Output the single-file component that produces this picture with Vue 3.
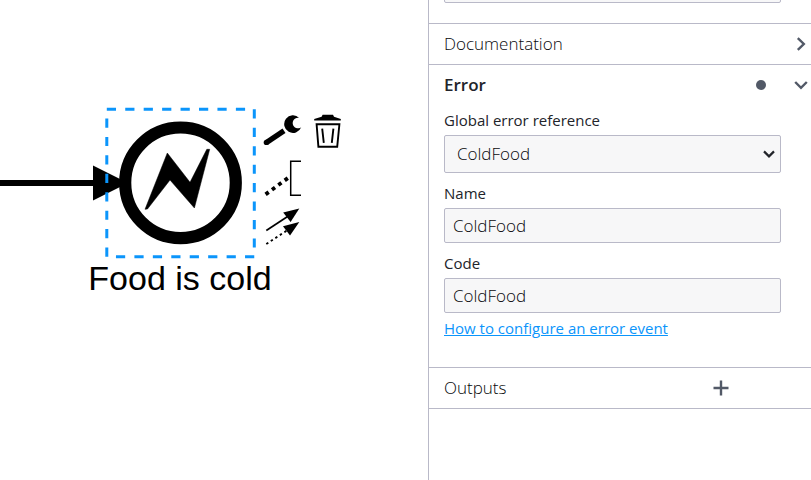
<script setup>
import { ref } from 'vue'

const elementName = ref('')
const errorRef = ref('ColdFood')
const errorName = ref('ColdFood')
const errorCode = ref('ColdFood')
const docOpen = ref(false)
const errorOpen = ref(true)
</script>

<template>
  <div class="modeler">
    <main class="canvas">
      <svg class="diagram" width="100%" height="100%" aria-label="Diagram">
        <path d="M0 183H96" stroke="#000" stroke-width="6" />
        <path d="M93 165.5L128 183L93 200.5Z" />
        <circle cx="180.5" cy="182.8" r="55.3" fill="#fff" stroke="#000" stroke-width="12.2" />
        <path d="M145 209.3L167.3 153L190 182.3L206.8 149.3L209.7 149.3L194.4 208L170 180L147.5 209Z" stroke="#000" stroke-width="0.5" stroke-linejoin="round" />
        <rect x="106.8" y="109.3" width="147.5" height="147.5" fill="none" stroke="#0b95fb" stroke-width="3" stroke-dasharray="9.22 9.22" />
        <text class="caption" x="180" y="290" text-anchor="middle">Food is cold</text>
      </svg>

      <div class="context-pad">
        <button type="button" class="tool" aria-label="Change element">
          <svg width="40" height="38" viewBox="0 0 40 38">
            <path d="M4.5 29.4L22 17.8" stroke="#000" stroke-width="5.4" />
            <circle cx="4.4" cy="29.4" r="2.7" />
            <path d="M37.2 4.9A8.8 8.8 0 1 0 39.2 14.3A5.3 5.3 0 1 1 37.2 4.9Z" />
          </svg>
        </button>
        <button type="button" class="tool" aria-label="Remove">
          <svg width="40" height="38" viewBox="0 0 40 38">
            <path d="M9.2 7.4V6L16.6 3.8L17.6 1.8H28L29 3.8L35.8 6V7.4Z" />
            <path d="M11.6 11.3H34.4L32.2 33.8H13.4Z" fill="none" stroke="#000" stroke-width="1.9" />
            <path d="M17.2 15.6L18.8 29.8M28.4 15.6L26.8 29.8" fill="none" stroke="#000" stroke-width="1.9" />
          </svg>
        </button>
        <button type="button" class="tool" aria-label="Add text annotation">
          <svg width="40" height="46" viewBox="0 0 40 46">
            <path d="M39 10.3H28.7V44.3H39" fill="none" stroke="#000" stroke-width="1.5" />
            <path d="M3.6 43.4L26 27" fill="none" stroke="#000" stroke-width="3.8" stroke-dasharray="3.8 4.1" />
          </svg>
        </button>
        <button type="button" class="tool wide" aria-label="Connect to other element">
          <svg width="40" height="48" viewBox="0 0 40 48">
            <path d="M4.3 33.5L26 19.3" stroke="#000" stroke-width="1.7" />
            <path d="M37.3 11.4L21.2 15.6L28.6 25Z" />
            <path d="M4.3 47L26 32.8" stroke="#000" stroke-width="1.9" stroke-dasharray="2.4 3" />
            <path d="M37.3 24.9L21 29.2L28 38.4Z" />
          </svg>
        </button>
      </div>
    </main>

    <aside class="panel">
      <div class="scrolled">
        <input v-model="elementName" class="control" type="text" aria-label="Element name" />
      </div>

      <section class="group">
        <button type="button" class="head" :aria-expanded="docOpen" @click="docOpen = !docOpen">
          <span class="title">Documentation</span>
          <svg class="icon" width="20" height="20" viewBox="0 0 20 20"><path d="M6.8 4.2L12.8 10L6.8 15.8" /></svg>
        </button>
      </section>

      <section class="group">
        <button type="button" class="head" :aria-expanded="errorOpen" @click="errorOpen = !errorOpen">
          <span class="title strong">Error</span>
          <span class="dot"></span>
          <svg class="icon" width="20" height="20" viewBox="0 0 20 20"><path d="M4.2 7L10 12.8L15.8 7" /></svg>
        </button>
        <div v-if="errorOpen" class="entries">
          <div class="entry">
            <label for="error-ref">Global error reference</label>
            <div class="picker">
              <select id="error-ref" v-model="errorRef" class="control">
                <option>ColdFood</option>
              </select>
              <svg class="arrow" width="16" height="16" viewBox="0 0 16 16"><path d="M3 5.4L8 10.4L13 5.4" /></svg>
            </div>
          </div>
          <div class="entry">
            <label for="error-name">Name</label>
            <input id="error-name" v-model="errorName" class="control" type="text" />
          </div>
          <div class="entry">
            <label for="error-code">Code</label>
            <input id="error-code" v-model="errorCode" class="control" type="text" />
          </div>
          <a class="help" href="#">How to configure an error event</a>
        </div>
      </section>

      <section class="group last">
        <div class="head">
          <span class="title">Outputs</span>
          <button type="button" class="add" aria-label="Create output">
            <svg class="icon" width="20" height="20" viewBox="0 0 20 20"><path d="M10 2.5V17.5M2.5 10H17.5" /></svg>
          </button>
        </div>
      </section>
    </aside>
  </div>
</template>

<style>
body {
  margin: 0;
  background: #fff;
}
</style>

<style scoped>
.modeler {
  display: grid;
  grid-template-columns: minmax(0, 1fr) minmax(0, 383px);
  min-height: 100vh;
  overflow: hidden;
  font-family: "Open Sans", "Noto Sans", sans-serif;
  color: #08090c;
}

.canvas {
  position: relative;
  overflow: hidden;
}

.diagram {
  position: absolute;
  inset: 0;
}

.caption {
  font: 34px "Liberation Sans", Arial, sans-serif;
}

.context-pad {
  position: absolute;
  left: 262px;
  top: 113px;
  display: grid;
  grid-template-columns: 40px 40px;
  column-gap: 3px;
}

.tool {
  display: block;
  padding: 0;
  border: 0;
  background: none;
}

.tool svg {
  display: block;
}

.wide {
  grid-column: 1;
}

.panel {
  box-sizing: border-box;
  border-left: 1px solid #b9b9c8;
  background: #fff;
}

.scrolled {
  display: flex;
  align-items: flex-end;
  box-sizing: border-box;
  height: 23px;
  padding: 0 30px 20px 15px;
  overflow: hidden;
}

.group {
  border-top: 1px solid #b9b9c8;
}

.last {
  border-bottom: 1px solid #b9b9c8;
}

.head {
  display: flex;
  align-items: center;
  box-sizing: border-box;
  width: 100%;
  height: 40px;
  padding: 0 0 0 15px;
  border: 0;
  background: none;
  color: inherit;
  font: 300 17px/24px "Open Sans", "Noto Sans", sans-serif;
  text-align: left;
}

.title {
  flex: 1;
}

.strong {
  font-weight: 600;
  color: #22242a;
}

.icon {
  display: block;
  flex: none;
  fill: none;
  stroke: #525967;
  stroke-width: 2.4;
}

.dot {
  width: 10px;
  height: 10px;
  margin-right: 25px;
  border-radius: 50%;
  background: #525967;
}

.add {
  margin-right: 80px;
  padding: 0;
  border: 0;
  background: none;
}

.entries {
  display: flex;
  flex-direction: column;
  gap: 10px;
  padding: 5px 30px 29px 15px;
}

.entry {
  display: flex;
  flex-direction: column;
  gap: 5px;
}

label,
.help {
  color: #22242a;
  font-size: 15px;
  line-height: 20px;
}

.help {
  align-self: flex-start;
  margin-top: -5px;
  color: #0b95fb;
  white-space: nowrap;
}

.control {
  box-sizing: border-box;
  width: 100%;
  height: 35px;
  flex: none;
  padding: 0 8px;
  border: 1px solid #b9b9c8;
  border-radius: 2px;
  background: #f7f7f8;
  color: #08090c;
  font: 300 17px/24px "Open Sans", "Noto Sans", sans-serif;
}

.picker {
  position: relative;
}

select.control {
  display: block;
  height: 38px;
  padding: 0 12px;
  appearance: none;
}

.arrow {
  position: absolute;
  right: 4px;
  top: 11px;
  fill: none;
  stroke: #22242a;
  stroke-width: 2.2;
  pointer-events: none;
}
</style>
